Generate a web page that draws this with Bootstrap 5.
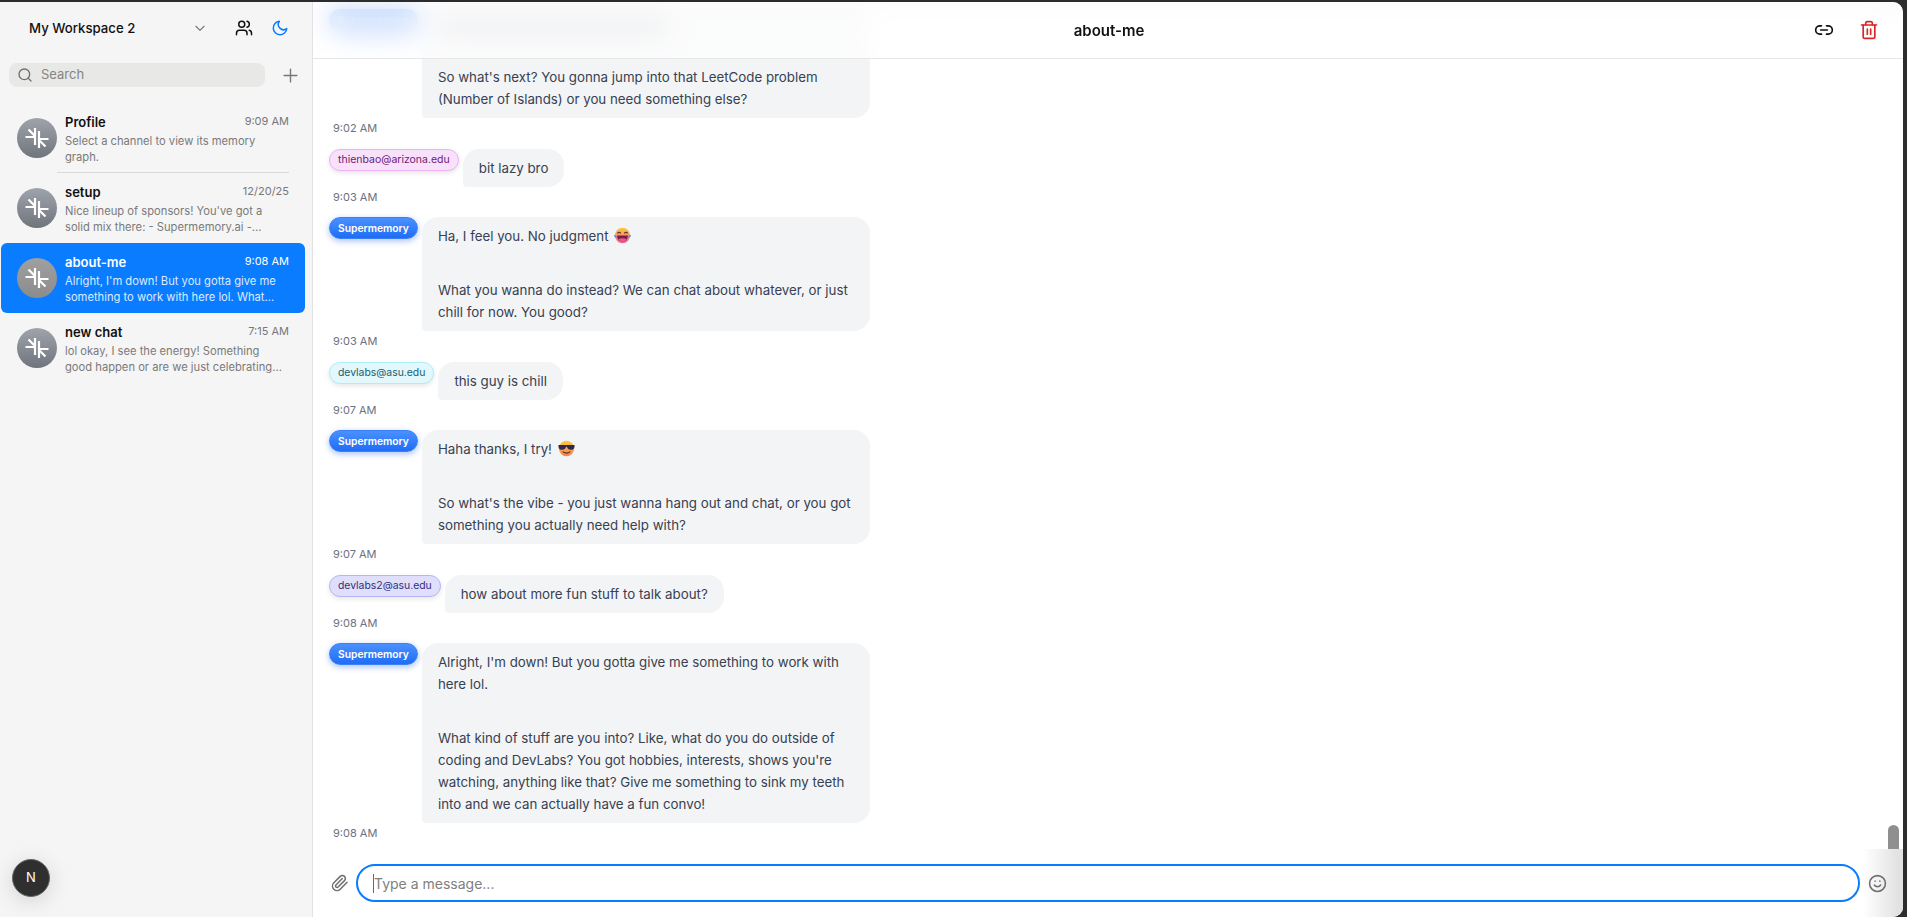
<!doctype html>
<html lang="en">
<head>
<meta charset="utf-8">
<title>about-me</title>
<meta name="viewport" content="width=device-width, initial-scale=1">
<link href="https://cdn.jsdelivr.net/npm/bootstrap@5.3.3/dist/css/bootstrap.min.css" rel="stylesheet">
<style>
  html, body { height:100%; }
  body { font-family:Inter, "Noto Sans", sans-serif; background:#2c2c2c; padding:2px 4px 0 0; overflow:hidden; }
  .app-shell { height:915px; background:#fff; border-radius:0 10px 10px 0; overflow:hidden; }

  /* sidebar */
  .side-col { width:313px; flex:none; background:#f5f5f5; border-right:1px solid #e2e2e2; padding:0 7px 0 1px; }
  .ws-row { height:52px; padding:0 0 0 28px; }
  .ws-name { font-size:13.2px; font-weight:500; color:#111; width:159px; padding-top:1px; }
  .ws-btn { width:36px; display:flex; justify-content:center; }
  .search-row { height:24px; margin:9px 0 16px 8px; }
  .search-box { width:256px; height:24px; background:#e8e8e6; border-radius:8px; padding-left:8px; font-size:13px; color:#85857f; gap:8px; }
  .plus-btn { margin-left:17px; }
  .chan-item { height:70px; padding:15px 16px 0; gap:8px; border-radius:6px; position:relative; }
  .chan-avatar { width:40px; height:40px; flex:none; border-radius:50%; background:linear-gradient(180deg,#9fa4ac,#70747d); }
  .chan-body { min-width:0; flex:1; margin-top:-5px; }
  .chan-top { height:18px; font-size:13px; font-weight:600; color:#111; }
  .chan-time { font-size:11px; font-weight:400; color:#777; }
  .chan-text { font-size:11.2px; line-height:16px; color:#7a7a7a; margin-top:2px; }
  .chan-item.is-on { background:#0a7cff; }
  .chan-item.is-on .chan-top, .chan-item.is-on .chan-time { color:#fff; }
  .chan-item.is-on .chan-text { color:#dcebff; }
  .chan-item.is-on .chan-avatar { background:linear-gradient(180deg,#a0a0a0,#8c8c8c); }
  .chan-sep::after { content:""; position:absolute; left:56px; right:16px; bottom:0; height:1px; background:#d9d9d9; }
  .next-badge { width:38px; height:38px; border-radius:50%; background:#2f2f2f; border:1px solid #666; color:#fff; font-size:13px; margin:0 0 20px 11px; box-shadow:0 4px 22px rgba(0,0,0,.14); }

  /* main */
  .main-col { min-width:0; position:relative; }
  .top-glass { position:absolute; top:0; left:0; right:0; height:57px; padding-top:2px; background:rgba(255,255,255,.68); backdrop-filter:blur(14px); border-bottom:1px solid #e6e6e8; z-index:2; }
  .top-title { font-size:15px; font-weight:600; color:#111; margin-left:2px; }
  .top-icons { position:absolute; right:24px; top:18px; gap:25px; }
  .msg-list { min-height:0; padding:0 16px 8px; overflow:hidden; }
  .msg-row { gap:4px; align-items:flex-start; }
  .who-tag { height:22px; border-radius:11px; padding:0 8px; font-size:10.4px; line-height:20px; border:1px solid; flex:none; box-shadow:0 2px 5px rgba(0,0,0,.1); }
  .who-ai { background:linear-gradient(180deg,#4a90ff,#1f6df5); border-color:#3a80f8; color:#fff; font-weight:600; font-size:10.3px; box-shadow:0 2px 6px rgba(37,99,235,.4); }
  .who-pink { background:#f8e1fb; border-color:#efb0f8; color:#701a75; font-size:10.5px; }
  .who-cyan { background:#e2f8fc; border-color:#aeeef6; color:#155e75; }
  .who-indigo { background:#dfdffb; border-color:#b4b6f3; color:#312e81; }
  .msg-bubble { background:#f3f4f6; color:#374151; font-size:13.3px; line-height:22px; padding:8px 16px; border-radius:16px 16px 16px 4px; }
  .msg-wide { width:448px; }
  .msg-bubble p { margin:0 0 32px; }
  .msg-bubble p:last-child { margin:0; }
  .msg-time { font-size:11px; line-height:16px; color:#6b7280; margin:2px 0 12.5px 4px; }
  .msg-time:last-child { margin-bottom:0; }
  .blur-line { display:block; width:230px; height:12px; margin-top:5px; margin-bottom:5px; background:#b9bcc2; border-radius:4px; }
  .emo { width:17px; height:17px; vertical-align:-3px; margin-left:2px; }

  /* composer */
  .composer { height:68px; flex:none; padding:0 0 0 18px; position:relative; background:linear-gradient(90deg,#fff 97.5%,#e2e2e2 99.7%); }
  .msg-input { width:1504px; height:38px; margin:0 8px 0 7px; border:2px solid #0a7cff; border-radius:19px; padding-left:15px; font-size:14px; color:#808080; }
  .caret-bar { width:1px; height:19px; background:#0a7cff; }
  .scroll-thumb { position:absolute; right:4px; bottom:68px; width:11px; height:24px; background:#8f8f8f; border-radius:6px 6px 0 0; z-index:1; }
</style>
</head>
<body>

<div class="app-shell d-flex">

  <!-- sidebar -->
  <aside class="side-col d-flex flex-column">
    <div class="ws-row d-flex align-items-center">
      <div class="ws-name">My Workspace 2</div>
      <div class="ws-btn" style="margin-left:-6px">
        <svg width="14" height="14" viewBox="0 0 24 24" fill="none" stroke="#777" stroke-width="2" stroke-linecap="round" stroke-linejoin="round"><path d="m5 9 7 7 7-7"/></svg>
      </div>
      <div class="ws-btn ms-2">
        <svg width="18" height="18" viewBox="0 0 24 24" fill="none" stroke="#111" stroke-width="2" stroke-linecap="round" stroke-linejoin="round"><path d="M16 21v-2a4 4 0 0 0-4-4H6a4 4 0 0 0-4 4v2"/><circle cx="9" cy="7" r="4"/><path d="M22 21v-2a4 4 0 0 0-3-3.9"/><path d="M16 3.1a4 4 0 0 1 0 7.8"/></svg>
      </div>
      <div class="ws-btn">
        <svg width="18" height="18" viewBox="0 0 24 24" fill="none" stroke="#0a7cff" stroke-width="2" stroke-linecap="round" stroke-linejoin="round"><path d="M21 12.8A9 9 0 1 1 11.2 3a7 7 0 0 0 9.8 9.8z"/></svg>
      </div>
    </div>

    <div class="search-row d-flex align-items-center">
      <div class="search-box d-flex align-items-center">
        <svg width="16" height="16" viewBox="0 0 24 24" fill="none" stroke="#6f6f6f" stroke-width="2" stroke-linecap="round"><circle cx="11" cy="11" r="8"/><path d="m21 21-4.3-4.3"/></svg>
        <span>Search</span>
      </div>
      <div class="plus-btn d-flex">
        <svg width="17" height="17" viewBox="0 0 24 24" fill="none" stroke="#777" stroke-width="2" stroke-linecap="round"><path d="M12 3v18M3 12h18"/></svg>
      </div>
    </div>

    <svg width="0" height="0" class="position-absolute">
      <symbol id="sm-logo" viewBox="0 0 40 40">
        <g fill="none" stroke="#fff" stroke-width="2.2">
          <path d="M18 10v17M8.500 19H18M11.500 11.500 18 18M22 30V13M31.500 21H22M28.500 28.500 22 22"/>
        </g>
      </symbol>
    </svg>

    <div class="chan-item chan-sep d-flex">
      <div class="chan-avatar"><svg width="40" height="40"><use href="#sm-logo"/></svg></div>
      <div class="chan-body">
        <div class="chan-top d-flex justify-content-between"><span>Profile</span><span class="chan-time">9:09 AM</span></div>
        <div class="chan-text">Select a channel to view its memory graph.</div>
      </div>
    </div>
    <div class="chan-item d-flex">
      <div class="chan-avatar"><svg width="40" height="40"><use href="#sm-logo"/></svg></div>
      <div class="chan-body">
        <div class="chan-top d-flex justify-content-between"><span>setup</span><span class="chan-time">12/20/25</span></div>
        <div class="chan-text">Nice lineup of sponsors! You've got a solid mix there: - Supermemory.ai -...</div>
      </div>
    </div>
    <div class="chan-item is-on d-flex">
      <div class="chan-avatar"><svg width="40" height="40"><use href="#sm-logo"/></svg></div>
      <div class="chan-body">
        <div class="chan-top d-flex justify-content-between"><span>about-me</span><span class="chan-time">9:08 AM</span></div>
        <div class="chan-text">Alright, I'm down! But you gotta give me something to work with here lol. What...</div>
      </div>
    </div>
    <div class="chan-item d-flex">
      <div class="chan-avatar"><svg width="40" height="40"><use href="#sm-logo"/></svg></div>
      <div class="chan-body">
        <div class="chan-top d-flex justify-content-between"><span>new chat</span><span class="chan-time">7:15 AM</span></div>
        <div class="chan-text">lol okay, I see the energy! Something good happen or are we just celebrating...</div>
      </div>
    </div>

    <div class="next-badge mt-auto d-flex align-items-center justify-content-center">N</div>
  </aside>

  <!-- chat -->
  <main class="main-col flex-grow-1 d-flex flex-column">
    <div class="top-glass d-flex align-items-center justify-content-center">
      <div class="top-title">about-me</div>
      <div class="top-icons d-flex align-items-center">
        <svg width="20" height="20" viewBox="0 0 24 24" fill="none" stroke="#111" stroke-width="2" stroke-linecap="round" stroke-linejoin="round"><path d="M9 17H7A5 5 0 0 1 7 7h2"/><path d="M15 7h2a5 5 0 1 1 0 10h-2"/><path d="M8 12h8"/></svg>
        <svg width="20" height="20" viewBox="0 0 24 24" fill="none" stroke="#dc2626" stroke-width="2" stroke-linecap="round" stroke-linejoin="round"><path d="M3 6h18"/><path d="M19 6v14a2 2 0 0 1-2 2H7a2 2 0 0 1-2-2V6"/><path d="M8 6V4a2 2 0 0 1 2-2h4a2 2 0 0 1 2 2v2"/><path d="M10 11v6M14 11v6"/></svg>
      </div>
    </div>

    <div class="msg-list flex-grow-1 d-flex flex-column justify-content-end">
      <div class="msg-row d-flex">
        <span class="who-tag who-ai">Supermemory</span>
        <div class="msg-bubble msg-wide">
          <p><span class="blur-line"></span></p>
          <p>So what's next? You gonna jump into that LeetCode problem (Number of Islands) or you need something else?</p>
        </div>
      </div>
      <div class="msg-time">9:02 AM</div>

      <div class="msg-row d-flex">
        <span class="who-tag who-pink">thienbao@arizona.edu</span>
        <div class="msg-bubble">bit lazy bro</div>
      </div>
      <div class="msg-time">9:03 AM</div>

      <div class="msg-row d-flex">
        <span class="who-tag who-ai">Supermemory</span>
        <div class="msg-bubble msg-wide">
          <p>Ha, I feel you. No judgment
            <svg class="emo" viewBox="0 0 20 20" role="img" aria-label="laughing">
              <defs><linearGradient id="emoA" x1="0" y1="0" x2="0" y2="1"><stop offset="0" stop-color="#ffc93c"/><stop offset="1" stop-color="#f2609a"/></linearGradient></defs>
              <circle cx="10" cy="10" r="9" fill="url(#emoA)"/>
              <path d="M4 7.500q2-2.500 4 0M12 7.500q2-2.500 4 0" fill="none" stroke="#5a3a2a" stroke-width="1.400"/>
              <path d="M3.500 10h13q-.5 7-6.500 7t-6.500-7z" fill="#7a1f4a"/>
              <path d="M5 14.500q5-2.500 10 0-2 2.500-5 2.500t-5-2.500z" fill="#f0568c"/>
              <path d="M0 9q3 .5 3.500 3.500Q.5 13 0 9zM20 9q-3 .5-3.500 3.500Q19.500 13 20 9z" fill="#3f8fe8"/>
            </svg>
          </p>
          <p>What you wanna do instead? We can chat about whatever, or just chill for now. You good?</p>
        </div>
      </div>
      <div class="msg-time">9:03 AM</div>

      <div class="msg-row d-flex">
        <span class="who-tag who-cyan">devlabs@asu.edu</span>
        <div class="msg-bubble">this guy is chill</div>
      </div>
      <div class="msg-time">9:07 AM</div>

      <div class="msg-row d-flex">
        <span class="who-tag who-ai">Supermemory</span>
        <div class="msg-bubble msg-wide">
          <p>Haha thanks, I try!
            <svg class="emo" viewBox="0 0 20 20" role="img" aria-label="sunglasses">
              <defs><linearGradient id="emoB" x1="0" y1="0" x2="0" y2="1"><stop offset="0" stop-color="#ffc93c"/><stop offset="1" stop-color="#f57f5b"/></linearGradient></defs>
              <circle cx="10" cy="10" r="9" fill="url(#emoB)"/>
              <path d="M0.500 6h19v1.500q-.5 4-4.500 4-3.500 0-4.500-3.500h-1q-1 3.500-4.500 3.500-4 0-4.500-4z" fill="#2d2a4a"/>
              <path d="M6 14q4 3 8 0" fill="none" stroke="#5a2a1a" stroke-width="1.300" stroke-linecap="round"/>
            </svg>
          </p>
          <p>So what's the vibe - you just wanna hang out and chat, or you got something you actually need help with?</p>
        </div>
      </div>
      <div class="msg-time">9:07 AM</div>

      <div class="msg-row d-flex">
        <span class="who-tag who-indigo">devlabs2@asu.edu</span>
        <div class="msg-bubble">how about more fun stuff to talk about?</div>
      </div>
      <div class="msg-time">9:08 AM</div>

      <div class="msg-row d-flex">
        <span class="who-tag who-ai">Supermemory</span>
        <div class="msg-bubble msg-wide">
          <p>Alright, I'm down! But you gotta give me something to work with here lol.</p>
          <p>What kind of stuff are you into? Like, what do you do outside of coding and DevLabs? You got hobbies, interests, shows you're watching, anything like that? Give me something to sink my teeth into and we can actually have a fun convo!</p>
        </div>
      </div>
      <div class="msg-time">9:08 AM</div>
    </div>

    <div class="scroll-thumb"></div>

    <div class="composer d-flex align-items-center">
      <svg width="18" height="18" viewBox="0 0 24 24" fill="none" stroke="#6f6f6f" stroke-width="2" stroke-linecap="round" stroke-linejoin="round"><path d="m21.440 11.050-9.190 9.190a6 6 0 0 1-8.490-8.490l8.570-8.570A4 4 0 1 1 18 8.840l-8.590 8.570a2 2 0 0 1-2.830-2.830l8.490-8.480"/></svg>
      <div class="msg-input d-flex align-items-center"><span class="caret-bar"></span>Type a message...</div>
      <svg width="19" height="19" viewBox="0 0 24 24" fill="none" stroke="#6f6f6f" stroke-width="2" stroke-linecap="round"><circle cx="12" cy="12" r="10"/><path d="M8 14s1.500 2 4 2 4-2 4-2"/><path d="M9 9h.01M15 9h.01"/></svg>
    </div>
  </main>
</div>

<script src="https://cdn.jsdelivr.net/npm/bootstrap@5.3.3/dist/js/bootstrap.bundle.min.js"></script>
</body>
</html>
